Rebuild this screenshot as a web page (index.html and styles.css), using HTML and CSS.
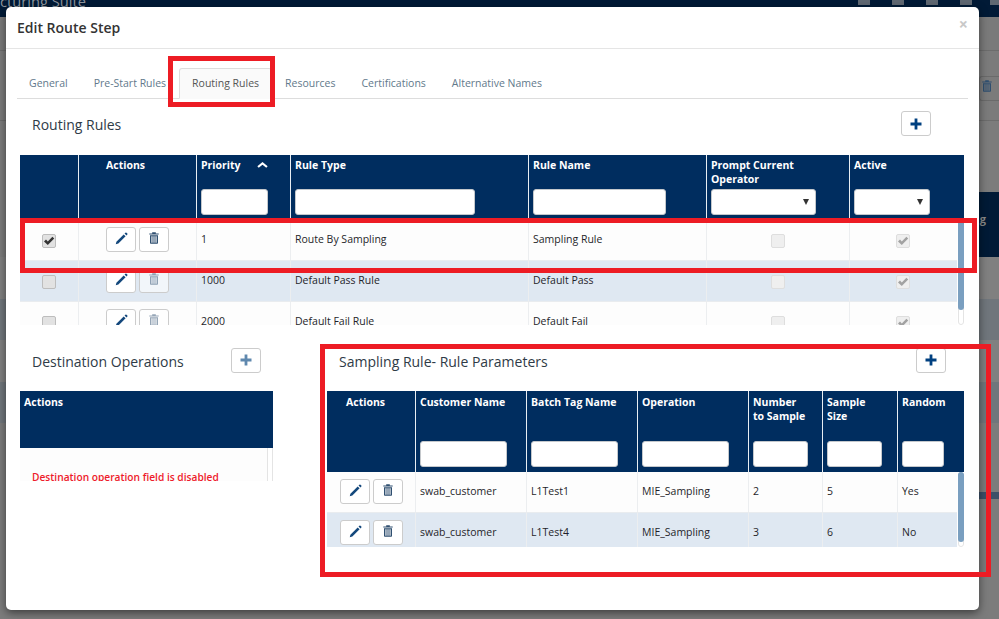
FILE: index.html
```html
<!DOCTYPE html>
<html lang="en">
<head>
<meta charset="utf-8">
<title>Edit Route Step</title>
<link rel="stylesheet" href="styles.css">
</head>
<body>
<svg class="defs" width="0" height="0" aria-hidden="true">
  <symbol id="pencil" viewBox="0 0 12 12"><path d="M0.7 11.3 L1.3 8.9 L8 2.2 L9.8 4 L3.1 10.7 Z M8.8 1.4 L9.6 0.6 Q10.1 0.2 10.6 0.6 L11.4 1.4 Q11.8 1.9 11.4 2.4 L10.6 3.2 Z"/></symbol>
  <symbol id="trash" viewBox="0 0 10 12"><path d="M3.2 1.4 L3.2 0.3 L6.8 0.3 L6.8 1.4 L9.7 1.4 L9.7 2.6 L0.3 2.6 L0.3 1.4 Z M1 3.3 L9 3.3 L9 11 Q9 11.8 8.2 11.8 L1.8 11.8 Q1 11.8 1 11 Z M2.4 4.3 L2.4 10.7 L3.5 10.7 L3.5 4.3 Z M4.5 4.3 L4.5 10.7 L5.5 10.7 L5.5 4.3 Z M6.5 4.3 L6.5 10.7 L7.6 10.7 L7.6 4.3 Z" fill-rule="evenodd"/></symbol>
  <symbol id="plus" viewBox="0 0 12 12"><path d="M4.6 0.5 H7.4 V4.6 H11.5 V7.4 H7.4 V11.5 H4.6 V7.4 H0.5 V4.6 H4.6 Z"/></symbol>
  <symbol id="check" viewBox="0 0 12 12"><path d="M1 6.4 L3 4.6 L4.8 6.5 L9.4 1.8 L11.2 3.6 L4.8 10 Z"/></symbol>
</svg>

<div class="backdrop">
  <div class="bg-top">
    <span class="bg-brand">cturing Suite</span>
    <span class="bg-icons"><i></i><i></i><i></i><i></i><i></i></span>
  </div>
  <div class="bg-row bg-a"></div>
  <div class="bg-row bg-b"><span class="bg-btn"><svg class="ico-trash bg-trash"><use href="#trash"/></svg></span></div>
  <div class="bg-row bg-c"></div>
  <div class="bg-navy"><span>g</span></div>
  <div class="bg-row bg-d"></div>
  <div class="bg-row bg-e"></div>
  <div class="bg-row bg-d"></div>
  <div class="bg-row bg-e"></div>
  <div class="bg-row bg-f"></div>
  <div class="bg-bar"></div>
</div>

<div class="modal">
  <header class="modal-head">
    <h4>Edit Route Step</h4>
    <span class="close">×</span>
  </header>

  <nav class="tabs">
    <a class="tab">General</a>
    <a class="tab">Pre-Start Rules</a>
    <a class="tab active">Routing Rules</a>
    <a class="tab">Resources</a>
    <a class="tab">Certifications</a>
    <a class="tab">Alternative Names</a>
  </nav>

  <div class="modal-body">
    <section class="rules">
      <div class="sec-head rules-head">
        <h5>Routing Rules</h5>
        <button class="btn plus-btn"><svg class="ico-plus"><use href="#plus"/></svg></button>
      </div>
      <div class="t-head rules-cols rules-head-row">
        <div class="th"></div>
        <div class="th actions-rules"><span>Actions</span></div>
        <div class="th"><span class="sort">Priority<svg class="chev" viewBox="0 0 12 7"><path d="M6 0 L12 5 L10.4 6.8 L6 3.2 L1.6 6.8 L0 5 Z"/></svg></span><input class="w67"></div>
        <div class="th"><span>Rule Type</span><input class="w180"></div>
        <div class="th"><span>Rule Name</span><input class="w133"></div>
        <div class="th"><span>Prompt Current<br>Operator</span><div class="sel w105"><select></select></div></div>
        <div class="th"><span>Active</span><div class="sel w76"><select></select></div></div>
      </div>
      <div class="t-body rules-body">
        <div class="rows">
          <div class="row rules-row">
            <div class="td center"><span class="cb on"><svg class="ico-check"><use href="#check"/></svg></span></div>
            <div class="td acts acts-r"><button class="btn act"><svg class="ico-pencil"><use href="#pencil"/></svg></button><button class="btn act"><svg class="ico-trash"><use href="#trash"/></svg></button></div>
            <div class="td">1</div>
            <div class="td">Route By Sampling</div>
            <div class="td">Sampling Rule</div>
            <div class="td center"><span class="cb off"></span></div>
            <div class="td center"><span class="cb off"><svg class="ico-check"><use href="#check"/></svg></span></div>
          </div>
          <div class="row rules-row alt">
            <div class="td center"><span class="cb"></span></div>
            <div class="td acts acts-r"><button class="btn act"><svg class="ico-pencil"><use href="#pencil"/></svg></button><button class="btn act dis"><svg class="ico-trash"><use href="#trash"/></svg></button></div>
            <div class="td">1000</div>
            <div class="td">Default Pass Rule</div>
            <div class="td">Default Pass</div>
            <div class="td center"><span class="cb off"></span></div>
            <div class="td center"><span class="cb off"><svg class="ico-check"><use href="#check"/></svg></span></div>
          </div>
          <div class="row rules-row">
            <div class="td center"><span class="cb"></span></div>
            <div class="td acts acts-r"><button class="btn act"><svg class="ico-pencil"><use href="#pencil"/></svg></button><button class="btn act dis"><svg class="ico-trash"><use href="#trash"/></svg></button></div>
            <div class="td">2000</div>
            <div class="td">Default Fail Rule</div>
            <div class="td">Default Fail</div>
            <div class="td center"><span class="cb off"></span></div>
            <div class="td center"><span class="cb off"><svg class="ico-check"><use href="#check"/></svg></span></div>
          </div>
        </div>
        <div class="track track-rules"><div class="thumb thumb-rules"></div></div>
      </div>
    </section>

    <div class="lower">
      <section class="dest">
        <div class="sec-head dest-head">
          <h5>Destination Operations</h5>
          <button class="btn plus-btn"><svg class="ico-plus light"><use href="#plus"/></svg></button>
        </div>
        <div class="t-head dest-head-row"><div class="th"><span>Actions</span></div></div>
        <div class="dest-body">
          <p class="warn">Destination operation field is disabled</p>
          <div class="track track-dest"></div>
        </div>
      </section>

      <section class="params">
        <div class="sec-head params-head">
          <h5>Sampling Rule- Rule Parameters</h5>
          <button class="btn plus-btn"><svg class="ico-plus"><use href="#plus"/></svg></button>
        </div>
        <div class="t-head param-cols param-head-row">
          <div class="th actions-th"><span>Actions</span></div>
          <div class="th"><span>Customer Name</span><input class="w87"></div>
          <div class="th"><span>Batch Tag Name</span><input class="w87"></div>
          <div class="th"><span>Operation</span><input class="w87"></div>
          <div class="th"><span>Number<br>to Sample</span><input class="w55"></div>
          <div class="th"><span>Sample<br>Size</span><input class="w55"></div>
          <div class="th"><span>Random</span><input class="w42"></div>
        </div>
        <div class="t-body param-body">
          <div class="rows">
            <div class="row param-row">
              <div class="td acts acts-p"><button class="btn act"><svg class="ico-pencil"><use href="#pencil"/></svg></button><button class="btn act"><svg class="ico-trash"><use href="#trash"/></svg></button></div>
              <div class="td">swab_customer</div><div class="td">L1Test1</div><div class="td">MIE_Sampling</div><div class="td">2</div><div class="td">5</div><div class="td">Yes</div>
            </div>
            <div class="row param-row alt">
              <div class="td acts acts-p"><button class="btn act"><svg class="ico-pencil"><use href="#pencil"/></svg></button><button class="btn act"><svg class="ico-trash"><use href="#trash"/></svg></button></div>
              <div class="td">swab_customer</div><div class="td">L1Test4</div><div class="td">MIE_Sampling</div><div class="td">3</div><div class="td">6</div><div class="td">No</div>
            </div>
          </div>
          <div class="track track-param"><div class="thumb thumb-param"></div></div>
        </div>
      </section>
    </div>
  </div>
</div>

<div class="mark mark-tab"></div>
<div class="mark mark-row"></div>
<div class="mark mark-params"></div>
</body>
</html>
```

FILE: styles.css
```css
* { box-sizing: border-box; }
html, body { margin: 0; padding: 0; }
body {
  width: 999px;
  height: 619px;
  overflow: hidden;
  position: relative;
  font-family: "Open Sans", "Liberation Sans", sans-serif;
  font-size: 10.5px;
  color: #222;
  background: #7c7c7c;
}
.defs { position: absolute; }

/* page behind the dialog */
.backdrop { display: flex; flex-direction: column; height: 619px; background: #7c7c7c; }
.bg-top {
  height: 17px;
  background: #011a36;
  display: flex;
  justify-content: space-between;
  overflow: hidden;
  flex: none;
}
.bg-brand {
  font-size: 14.7px;
  line-height: 16px;
  color: #8d949c;
  margin-top: -7px;
  white-space: nowrap;
}
.bg-icons { display: flex; gap: 22px; margin-right: -3px; }
.bg-icons i { width: 12px; height: 5px; background: #5f6872; display: block; }
.bg-icons i:last-child { margin-left: -4px; }
.bg-row { flex: none; }
.bg-a { height: 34px; border-bottom: 1px solid #6c6c6c; background: #7a7a7a; }
.bg-b { height: 70px; border-bottom: 1px solid #6c6c6c; background: #7b7b7b; display: flex; justify-content: flex-end; padding-top: 25px; }
.bg-btn { width: 20px; height: 25px; border: 1px solid #6a6a6a; border-right: 0; border-radius: 3px 0 0 3px; display: flex; padding: 6px 0 0 2px; }
.bg-trash { fill: #2b3640; width: 10px; height: 12px; }
.bg-c { height: 71px; background: #7c7c7c; }
.bg-navy { height: 65px; flex: none; margin-left: 6px; background: #011a36; color: #8a8a8a; font-weight: 700; font-size: 11px; text-align: right; padding: 19px 13px 0 0; }
.bg-d { height: 42px; background: #808080; }
.bg-e { height: 41px; background: #70767c; }
.bg-f { height: 69px; background: #7c7c7c; }
.bg-bar { height: 7px; margin-left: 6px; background: #3c5068; flex: none; }

/* dialog */
.modal {
  position: absolute;
  left: 6px;
  top: 7px;
  width: 973px;
  height: 603px;
  background: #fff;
  border-radius: 5px;
  box-shadow: 0 3px 9px rgba(0, 0, 0, .5);
  display: flex;
  flex-direction: column;
}
.modal-head {
  flex: none;
  height: 42px;
  border-bottom: 1px solid #e5e5e5;
  display: flex;
  justify-content: space-between;
  padding: 0 11px;
}
.modal-head h4 { margin: 11px 0 0; font-size: 14px; line-height: 19px; font-weight: 600; color: #333; }
.close { font-size: 16px; line-height: 16px; font-weight: 700; color: #c8c8c8; margin-top: 9px; }

.tabs {
  flex: none;
  display: flex;
  margin: 19px 11px 0;
  height: 31px;
  border-bottom: 1px solid #ddd;
}
.tab {
  height: 31px;
  padding: 0 12px;
  line-height: 29px;
  color: #62798b;
  border: 1px solid transparent;
  border-radius: 3px 3px 0 0;
  white-space: nowrap;
}
.tab:first-child { margin-left: -1px; }
.tab.active { color: #555; background: #fafafa; border-color: #ddd #ddd #fafafa; }

.modal-body { flex: 1; padding: 0 14px; min-height: 0; }

.sec-head { display: flex; justify-content: space-between; align-items: center; }
.sec-head h5 { margin: 0; font-size: 14px; line-height: 20px; font-weight: 400; color: #2f3b47; white-space: nowrap; }
.rules-head { height: 56px; padding: 12px 34px 19px 12px; }
.rules-head h5 { margin-top: 3px; }
.dest-head h5, .params-head h5 { margin-top: 4px; }
.btn {
  background: #fff;
  border: 1px solid #ccc;
  border-radius: 3px;
  padding: 0;
  display: flex;
  align-items: center;
  justify-content: center;
}
.plus-btn { width: 30px; height: 25px; flex: none; }
.ico-plus { width: 12px; height: 12px; fill: #004080; }
.ico-plus.light { fill: #5f88ae; }

/* tables */
.t-head { background: #002d5f; color: #fff; font-weight: 700; }
.rules-cols { display: grid; grid-template-columns: 59px 118px 94px 238px 178px 143px 114px; }
.param-cols { display: grid; grid-template-columns: 89px 111px 111px 111px 74px 75px 66px; }
.rules-head-row { height: 65px; width: 944px; }
.param-head-row { height: 81px; width: 637px; }
.th {
  display: flex;
  flex-direction: column;
  justify-content: space-between;
  align-items: flex-start;
  padding: 3px 4px 5px;
  line-height: 14px;
  border-right: 1px solid #e8edf2;
  white-space: nowrap;
}
.param-head-row .th { padding-top: 4px; }
.th:last-child { border-right: 0; }
.th.actions-rules { padding-left: 27px; }
.param-head-row .th.actions-th { padding: 4px 0 0 19px; }
.th input, .sel select {
  display: block;
  height: 26px;
  background: #fff;
  border: 1px solid #c4c8cc;
  border-radius: 3px;
  padding: 0;
  margin: 0;
}
.w42 { width: 42px; } .w55 { width: 55px; } .w67 { width: 67px; } .w76 { width: 76px; } .w87 { width: 87px; }
.w105 { width: 105px; } .w133 { width: 133px; } .w180 { width: 180px; }
.sel { position: relative; height: 26px; }
.sel select { width: 100%; appearance: none; }
.sel::after {
  content: "";
  position: absolute;
  right: 7px;
  top: 10px;
  border-left: 3px solid transparent;
  border-right: 3px solid transparent;
  border-top: 6px solid #333;
}
.sort { display: flex; justify-content: space-between; align-items: center; width: 67px; }
.chev { width: 11px; height: 6px; fill: #fff; }

.t-body { display: flex; overflow: hidden; background: #fff; }
.rules-body { height: 105px; width: 944px; }
.param-body { height: 75px; width: 637px; }
.rows { flex: none; }
.row { display: grid; height: 41px; background: #fdfdfd; border-bottom: 1px solid #e9ecef; }
.row.alt { background: #dfe8f2; }
.rules-row { width: 937px; grid-template-columns: 59px 118px 94px 238px 178px 143px 107px; }
.param-row { width: 630px; grid-template-columns: 89px 111px 111px 111px 74px 75px 59px; }
.td { padding: 12px 4px 0; line-height: 14px; border-right: 1px solid #eceef0; white-space: nowrap; color: #1f1f2a; }
.td:last-child { border-right: 0; }
.td.center { display: flex; justify-content: center; padding: 14px 0 0; }
.td.center:last-child { padding-right: 1px; }
.acts { display: flex; gap: 3px; padding-top: 7px; }
.acts-r { padding-left: 27px; }
.acts-p { padding-left: 13px; }
.act { width: 30px; height: 25px; flex: none; }
.act.dis { background: rgba(255, 255, 255, .6); }
.act.dis svg { opacity: .5; }
.ico-pencil { width: 13px; height: 13px; fill: #14487c; margin-top: -2px; }
.ico-trash { width: 10px; height: 12px; fill: #2f4f70; margin-top: -3px; }
.cb {
  width: 14px;
  height: 14px;
  display: flex;
  align-items: center;
  justify-content: center;
  background: #e2e2e2;
  border: 1px solid #bdbdbd;
  border-radius: 2px;
}
.cb.off { background: #efefef; border-color: #dedede; }
.ico-check { width: 12px; height: 12px; fill: #333; }
.cb.off .ico-check { fill: #a2a2a2; }

.track { flex: none; width: 6px; margin-left: 1px; border: 1px solid #e4e4e4; border-radius: 3px; background: #fff; }
.track-rules { height: 105px; }
.track-param { height: 75px; }
.thumb { background: #7a9fc0; width: 6px; margin-left: -1px; margin-top: -1px; border-radius: 3px; }
.thumb-rules { height: 90px; }
.thumb-param { height: 70px; }

.lower { display: flex; gap: 54px; padding-top: 22px; }
.dest { width: 253px; flex: none; }
.params { width: 637px; flex: none; }
.dest-head { height: 44px; padding: 0 12px 18px; }
.params-head { height: 44px; padding: 0 18px 18px 12px; }
.dest-head-row { height: 57px; width: 253px; }
.dest-head-row .th { border: 0; padding-top: 4px; }
.dest-body { height: 33px; width: 253px; background: #fdfdfd; display: flex; justify-content: space-between; overflow: hidden; }
.warn { margin: 22px 0 0 12px; color: #ee1b2b; font-weight: 600; line-height: 15px; font-size: 10.2px; white-space: nowrap; }
.track-dest { width: 6px; height: 33px; margin: 0; border-width: 0 1px; border-radius: 0; }

/* review annotations drawn over the screenshot */
.mark { position: absolute; border: 5px solid #ed1c24; pointer-events: none; }
.mark-tab { left: 168px; top: 56px; width: 107px; height: 51px; }
.mark-row { left: 20px; top: 218px; width: 957px; height: 55px; }
.mark-params { left: 320px; top: 344px; width: 671px; height: 233px; }
```
